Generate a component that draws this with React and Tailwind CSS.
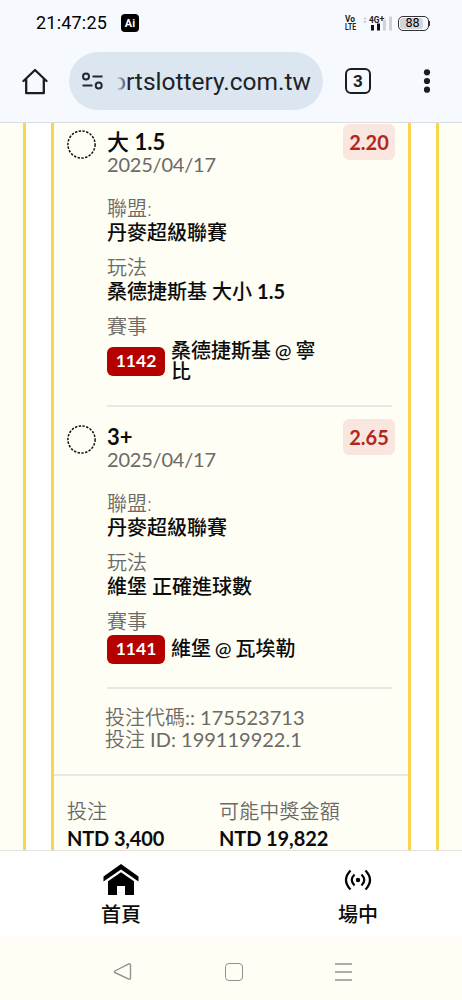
import { clsx } from "clsx";

const bets = [
    {
        pick: "大 1.5",
        odds: "2.20",
        date: "2025/04/17",
        league: "丹麥超級聯賽",
        market: "桑德捷斯基 大小 1.5",
        code: "1142",
        match: "桑德捷斯基 @ 寧比",
    },
    {
        pick: "3+",
        odds: "2.65",
        date: "2025/04/17",
        league: "丹麥超級聯賽",
        market: "維堡 正確進球數",
        code: "1141",
        match: "維堡 @ 瓦埃勒",
    },
];

// Lato has no medium cut here, so digits are set bold next to medium Chinese
function Strong({ text }) {
    return text.split(/([\d.+]+)/).map((part, i) =>
        i % 2 ? (
            <span key={i} className="font-bold">
                {part}
            </span>
        ) : (
            part
        )
    );
}

function StatusBar() {
    return (
        <div className="flex h-[46px] items-center pl-[36px] pr-[32px] font-['Roboto',sans-serif] text-black">
            <span className="w-[72px] whitespace-nowrap text-[18px] leading-none tracking-[0.2px]">
                21:47:25
            </span>
            <span className="ml-[13px] flex h-[18px] w-[18px] items-center justify-center rounded-[4px] bg-black text-[11px] font-bold leading-none text-white">
                Ai
            </span>
            <div className="ml-auto flex items-center">
                <svg
                    width="13"
                    height="20"
                    viewBox="0 0 13 20"
                    fill="#222"
                    fontWeight="700"
                    className="overflow-visible"
                >
                    <text x="1" y="9.2" fontSize="9.5" textLength="10" lengthAdjust="spacingAndGlyphs">
                        Vo
                    </text>
                    <text x="1" y="17" fontSize="9.5" textLength="11" lengthAdjust="spacingAndGlyphs">
                        LTE
                    </text>
                </svg>
                <svg width="30" height="18" viewBox="0 0 30 18" className="ml-[6px]">
                    <path d="M0 5.5 2 3 4 5.5M0 7 2 9.5 4 7" fill="#ccc" />
                    <path d="M8 11h3v5.5H8zM14 9.5h3v7h-3z" fill="#111" />
                    <path d="M20 6h3v10.5h-3zM26 2.5h3v14h-3z" fill="#d0d2d6" />
                    <text x="6" y="8.5" fontSize="9.5" fontWeight="700" fill="#222" textLength="10.5" lengthAdjust="spacingAndGlyphs">
                        4G
                    </text>
                    <path d="M19 2v5M16.7 4.5h4.6" stroke="#222" strokeWidth="1.2" />
                </svg>
                <span className="ml-[5px] flex h-[15px] w-[31px] items-center rounded-[5px] border-[1.5px] border-[#333] p-px">
                    <span className="flex h-full w-[23px] items-center justify-center rounded-[3px] bg-[#d4d5d8] pl-[3px] text-[12.5px] leading-none">
                        88
                    </span>
                </span>
                <span className="h-[5px] w-[1.5px] bg-[#333]" />
            </div>
        </div>
    );
}

function AddressBar() {
    return (
        <div className="flex h-[77px] items-start pl-[22px] pr-[31px] pt-[6px] font-['Roboto',sans-serif]">
            <svg
                width="26"
                height="27"
                viewBox="0 0 26 27"
                className="mt-[16px]"
                fill="none"
                stroke="#1b1d21"
                strokeWidth="2.3"
                strokeLinejoin="round"
                strokeLinecap="round"
            >
                <path d="M1.5 13 13 2l11.5 11M4.2 11.5v13.7h17.6V11.5" />
            </svg>
            <div className="ml-[21px] flex h-[58px] w-[254px] items-center rounded-full bg-[#dce6f0] pl-[12px]">
                <svg
                    width="23"
                    height="20"
                    viewBox="0 0 23 20"
                    fill="none"
                    stroke="#24282e"
                    strokeWidth="2"
                >
                    <circle cx="5" cy="5.5" r="3" />
                    <path d="M11.5 5.5H21.5M1.5 14.5h10" />
                    <circle cx="17.7" cy="14.5" r="3" />
                </svg>
                <div className="relative ml-[8px] mt-[2px]">
                    <span className="block whitespace-nowrap text-[24.5px] leading-[36px] text-[#1d2229]">
                        ortslottery.com.tw
                    </span>
                    <span className="absolute left-0 top-0 h-full w-[15px] bg-gradient-to-r from-[#dce6f0] from-30% to-[#dce6f0]/10" />
                </div>
            </div>
            <div className="ml-[22px] mt-[16px] flex h-[26px] w-[26px] items-center justify-center rounded-[6px] border-2 border-[#1b1d21] text-[17px] font-bold leading-none text-[#1b1d21]">
                3
            </div>
            <svg width="8" height="28" viewBox="0 0 8 28" className="ml-auto mt-[15px]" fill="#1b1d21">
                <circle cx="4" cy="5.3" r="3.1" />
                <circle cx="4" cy="14" r="3.1" />
                <circle cx="4" cy="22.7" r="3.1" />
            </svg>
        </div>
    );
}

function Field({ label, value }) {
    return (
        <div className="mb-[12px] leading-[23px]">
            <p className="mb-px font-[350] text-[#6b6a66]">{label}</p>
            <p className="font-medium">
                <Strong text={value} />
            </p>
        </div>
    );
}

function Bet({ bet, last }) {
    return (
        <section
            className={clsx(
                "flex pl-[13px] pr-[13px] text-[20px]",
                last ? "h-[281px]" : "h-[295px]"
            )}
        >
            <svg width="30" height="30" viewBox="0 0 30 30" className="shrink-0">
                <circle
                    cx="14.5"
                    cy="14.5"
                    r="13.6"
                    fill="none"
                    stroke="#111"
                    strokeWidth="1.5"
                    strokeDasharray="2.4 1.4"
                />
            </svg>
            <div className="ml-[10px] flex-1">
                <div className="flex justify-between">
                    <div className="leading-[23px]">
                        <p className="text-[22px] font-medium leading-[23px]">
                            <Strong text={bet.pick} />
                        </p>
                        <p className="text-[20px] tracking-[-0.2px] text-[#6b6a66]">{bet.date}</p>
                    </div>
                    <span className="-mt-[6px] flex h-[36px] w-[52px] items-center justify-center rounded-[6px] bg-[#f8e6df] text-[20px] font-bold text-[#b3261e]">
                        {bet.odds}
                    </span>
                </div>
                <div className="mt-[21px]">
                    <Field label="聯盟:" value={bet.league} />
                    <Field label="玩法" value={bet.market} />
                    <p className="font-[350] leading-[23px] text-[#6b6a66]">賽事</p>
                    <div
                        className={clsx(
                            "flex items-center",
                            last ? "h-[32px]" : "h-[46px]"
                        )}
                    >
                        <span className="flex h-[29px] w-[58px] shrink-0 items-center justify-center rounded-[6px] bg-[#b50000] text-[17.5px] font-bold text-white">
                            {bet.code}
                        </span>
                        <span className="ml-[6px] w-[150px] break-all font-medium leading-[21.5px] [word-spacing:-1.2px]">
                            {bet.match}
                        </span>
                    </div>
                </div>
                <div
                    className={clsx(
                        "mr-[3px] h-[2px] bg-[#e8e7e1]",
                        last ? "mt-[22px]" : "mt-[21px]"
                    )}
                />
            </div>
        </section>
    );
}

function BetSlip() {
    return (
        <main className="flex h-[728px] overflow-hidden border-t border-[#dadce0] bg-[#fffef5]">
            <div className="w-[23px] shrink-0" />
            <div className="flex w-[416px] shrink-0 border-x-[3px] border-[#f8d84a] bg-white px-[25px]">
                <div className="flex-1 border-x-[3px] border-[#fdd34c] bg-[#fffef5] pt-[7px]">
                    {bets.map((bet, i) => (
                        <Bet key={bet.code} bet={bet} last={i === bets.length - 1} />
                    ))}
                    <div className="h-[68px] pl-[51px] text-[20px] leading-[22px] text-[#6b6a66]">
                        <p>
                            <span className="font-[350]">投注代碼</span>:: 175523713
                        </p>
                        <p>
                            <span className="font-[350]">投注</span> ID: 199119922.1
                        </p>
                    </div>
                    <div className="flex border-t-2 border-[#e9e8e2] pl-[13px] pt-[22px] text-[20px] leading-[27px]">
                        <div className="w-[152px]">
                            <p className="font-[350] text-[#6b6a66]">投注</p>
                            <p className="font-bold tracking-[-0.15px]">NTD 3,400</p>
                        </div>
                        <div>
                            <p className="font-[350] tracking-[0.15px] text-[#6b6a66]">可能中獎金額</p>
                            <p className="font-bold tracking-[-0.1px]">NTD 19,822</p>
                        </div>
                    </div>
                </div>
            </div>
        </main>
    );
}

function BottomNav() {
    return (
        <nav className="flex h-[87px] items-start justify-between border-t border-[#e2e2e0] bg-white px-[85px] pt-[12px] text-[20px] font-medium">
            <div className="flex w-[72px] flex-col items-center">
                <svg width="36" height="34" viewBox="0 0 36 34">
                    <path d="M18 1 0.5 13.5v5L18 6.5l17.500 12v-5z" />
                    <path d="M18 9.3 5 18.3V32h9v-9h8v9h9V18.3z" />
                </svg>
                <span className="mt-[5px] leading-[24px]">首頁</span>
            </div>
            <div className="-mr-[17px] flex w-[72px] flex-col items-center">
                <svg
                    width="28"
                    height="34"
                    viewBox="0 0 28 34"
                    fill="none"
                    stroke="black"
                    strokeWidth="2.2"
                >
                    <path d="M6.5 7.5Q-2.5 17 6.5 26.5M21.5 7.5Q30.5 17 21.5 26.5" />
                    <path d="M10.5 11.5Q5 17 10.5 22.5M17.5 11.5Q23 17 17.5 22.5" />
                    <circle cx="14" cy="17" r="2.2" fill="black" stroke="none" />
                </svg>
                <span className="mt-[5px] leading-[24px]">場中</span>
            </div>
        </nav>
    );
}

function SystemNav() {
    return (
        <div className="flex h-[63px] items-center justify-between bg-[#fffdf4] pb-px pl-[113px] pr-[109px] pt-[8px]">
            <svg width="20" height="20" viewBox="0 0 20 20" fill="none" stroke="#92918d" strokeWidth="1.4">
                <path
                    d="M1.8 9 15.8 1.9Q17.5 1.5 17.5 3V16Q17.5 17.5 15.8 17.1L1.8 10.5Q1 9.7 1.8 9Z"
                    strokeLinejoin="round"
                />
            </svg>
            <span className="h-[18px] w-[18px] rounded-[4px] border-[1.5px] border-[#92918d]" />
            <svg width="19" height="18" viewBox="0 0 19 18" stroke="#92918d" strokeWidth="1.5">
                <path d="M1 1h17M1 9h17M1 17h17" />
            </svg>
        </div>
    );
}

export default function App() {
    return (
        <div className="h-[1000px] w-[462px] overflow-hidden bg-[#f6f9fe] font-['Lato','Noto_Sans_CJK_TC',sans-serif] text-[#0c0c0c]">
            <StatusBar />
            <div className="-mb-px">
                <AddressBar />
            </div>
            <BetSlip />
            <BottomNav />
            <SystemNav />
        </div>
    );
}
